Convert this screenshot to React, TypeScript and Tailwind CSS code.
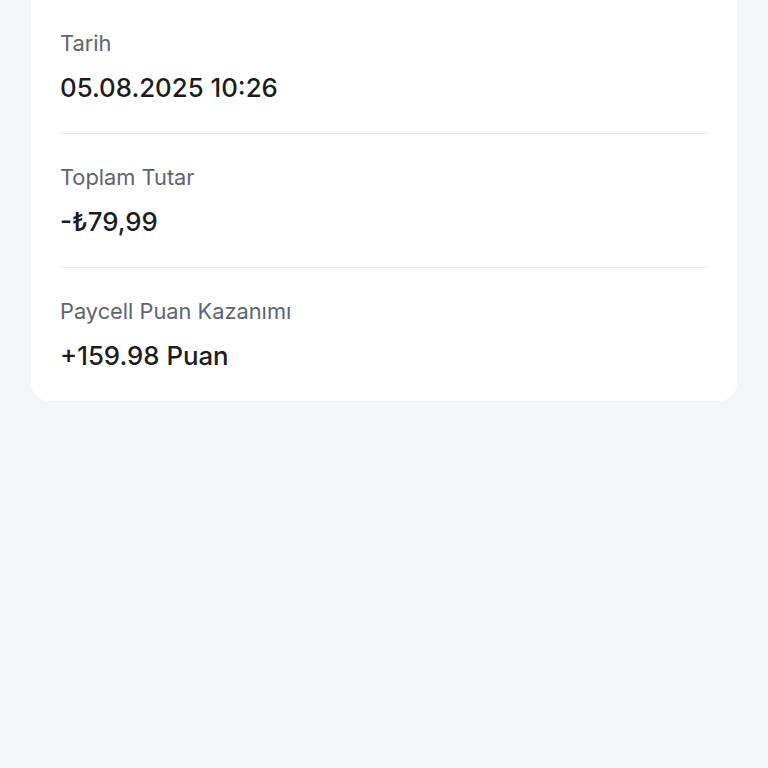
export default function App() {
  const rows = [
    { label: 'Tarih', value: '05.08.2025 10:26' },
    { label: 'Toplam Tutar', value: '-₺79,99' },
    { label: 'Paycell Puan Kazanımı', value: '+159.98 Puan' },
  ];

  return (
    <main className="min-h-screen bg-[#f4f5f7] px-[31px]" style={{ fontFamily: 'Inter, "Noto Sans", sans-serif' }}>
      <div className="bg-white rounded-b-[18px] px-[29px]">
        {rows.map((row, i) => (
          <div
            key={row.label}
            className={
              'pt-[29px] pb-[29px] flex flex-col gap-[15px] ' +
              (i < rows.length - 1 ? 'border-b border-[#e6e8eb]' : '')
            }
          >
            <p className="text-[21.8px] leading-[28px] text-[#5d6472]">{row.label}</p>
            <p className="text-[25.8px] leading-[32px] text-[#1c1c1e] font-medium">{row.value}</p>
          </div>
        ))}
      </div>
    </main>
  );
}
